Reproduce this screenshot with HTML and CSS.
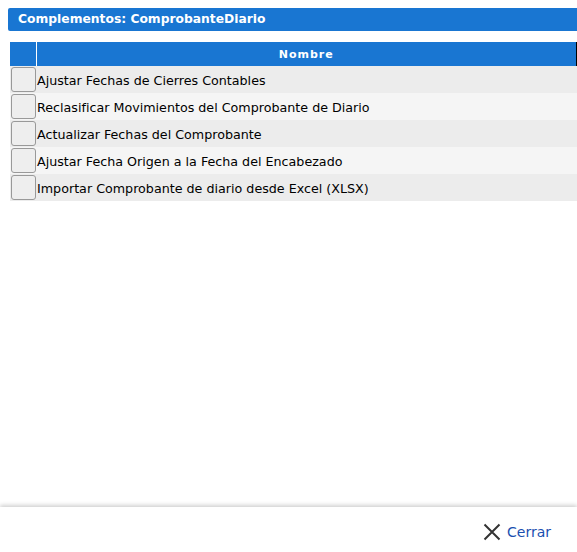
FILE: index.html
```html
<!DOCTYPE html>
<html lang="es">
<head>
  <meta charset="UTF-8">
  <title>Complementos</title>
  <link rel="stylesheet" href="styles.css">
</head>
<body>
  <div class="panel">
    <div class="panel-title">Complementos: ComprobanteDiario</div>

    <table class="grid">
      <thead>
        <tr>
          <th class="col-sel"></th>
          <th>Nombre</th>
        </tr>
      </thead>
      <tbody>
        <tr>
          <td class="col-sel"><button class="sel-btn"></button></td>
          <td>Ajustar Fechas de Cierres Contables</td>
        </tr>
        <tr>
          <td class="col-sel"><button class="sel-btn"></button></td>
          <td>Reclasificar Movimientos del Comprobante de Diario</td>
        </tr>
        <tr>
          <td class="col-sel"><button class="sel-btn"></button></td>
          <td>Actualizar Fechas del Comprobante</td>
        </tr>
        <tr>
          <td class="col-sel"><button class="sel-btn"></button></td>
          <td>Ajustar Fecha Origen a la Fecha del Encabezado</td>
        </tr>
        <tr>
          <td class="col-sel"><button class="sel-btn"></button></td>
          <td>Importar Comprobante de diario desde Excel (XLSX)</td>
        </tr>
      </tbody>
    </table>
  </div>

  <div class="footer">
    <a class="close-link" href="#">
      <svg width="18" height="18" viewBox="0 0 18 18">
        <path d="M1.5 1.5 L16.5 16.5 M16.5 1.5 L1.5 16.5" stroke="#333" stroke-width="2" fill="none"/>
      </svg>
      Cerrar
    </a>
  </div>
</body>
</html>
```

FILE: styles.css
```css
* {
  box-sizing: border-box;
}
html, body {
  height: 100%;
}
body {
  margin: 0;
  font-family: 'DejaVu Sans', sans-serif;
  font-size: 12.7px;
  color: #000;
  background: #fff;
  display: flex;
  flex-direction: column;
  overflow: hidden;
}
.panel {
  flex: 1;
  padding: 8px 0 0 8px;
}
.panel-title {
  background-color: #1976d2;
  color: #fff;
  font-size: 12.3px;
  font-weight: bold;
  height: 23px;
  line-height: 23px;
  padding-left: 10px;
  border-radius: 2px 0 0 2px;
}

/* tabla de complementos */
.grid {
  margin: 11px 0 0 2px;
  width: 567px;
  border-collapse: collapse;
}
.grid th {
  background-color: #1976d2;
  color: #fff;
  font-size: 11px;
  font-weight: bold;
  letter-spacing: 1px;
  height: 24px;
  padding: 0;
  text-align: center;
  border-right: 1px solid #000;
}
.grid th.col-sel {
  border-right: 1px solid #fff;
}
.grid td {
  height: 27px;
  padding: 1px 0 0 1px;
  vertical-align: middle;
}
.grid tbody tr:nth-child(odd) {
  background-color: #ececec;
}
.grid tbody tr:nth-child(even) {
  background-color: #f5f5f5;
}
.grid .col-sel {
  width: 26px;
  padding: 0;
}
.sel-btn {
  display: block;
  width: 25px;
  height: 25px;
  margin: 1px 0 1px 1px;
  padding: 0;
  background-color: #eee;
  border: 1px solid #999;
  border-radius: 3px;
}

/* pie con el botón de cerrar */
.footer {
  height: 45px;
  flex-shrink: 0;
  background: #fff;
  box-shadow: 0 -2px 4px rgba(0, 0, 0, 0.18);
  display: flex;
  align-items: center;
  justify-content: flex-end;
  padding: 4px 26px 0 0;
}
.close-link {
  display: flex;
  align-items: center;
  gap: 6px;
  color: #1a4fb0;
  font-size: 14px;
  text-decoration: none;
}
```
